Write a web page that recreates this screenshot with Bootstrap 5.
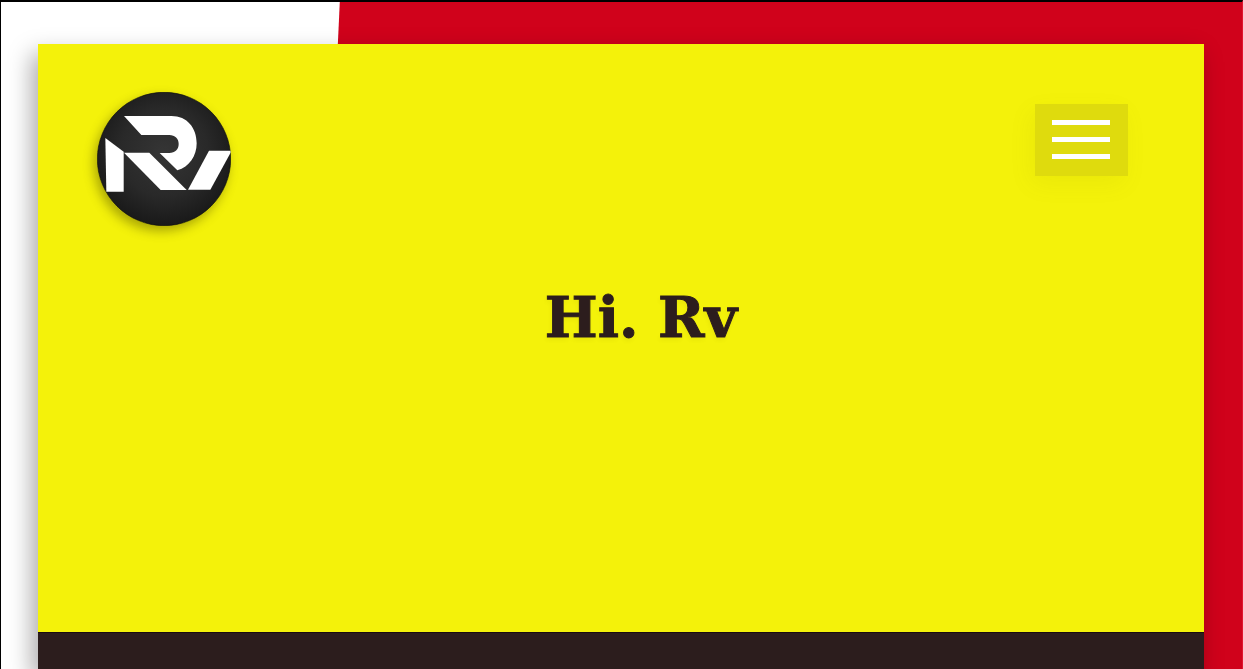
<!DOCTYPE html>
<html lang="en">
<head>
<meta charset="utf-8">
<meta name="viewport" content="width=device-width, initial-scale=1">
<title>Hi. Rv</title>
<link href="https://cdn.jsdelivr.net/npm/bootstrap@5.3.0/dist/css/bootstrap.min.css" rel="stylesheet">
<style>
  body { background: #fff; }
  .stage {
    position: relative;
    isolation: isolate;
    padding: 42px 38px 0 37px;
    border-top: 2px solid #000;
    border-left: 1px solid #000;
    border-right: 1px solid #e0152f;
    overflow: hidden;
  }
  /* slanted red backdrop behind the sheet */
  .stage::before {
    content: "";
    position: absolute;
    inset: 0;
    z-index: -1;
    background: #d0021b;
    clip-path: polygon(27.3% 0, 100% 0, 100% 100%, 24.8% 100%);
  }
  .sheet { box-shadow: -6px 10px 22px rgba(10, 0, 5, .34); }
  .hero { background: #f4f20a; }
  .topbar { padding: 48px 76px 0 59px; }
  .brand-logo {
    width: 134px;
    height: 134px;
    border-radius: 50%;
    box-shadow: -3px 5px 11px rgba(80, 75, 0, .45);
  }
  .brand-logo svg { width: 100%; height: 100%; }
  .menu-btn {
    width: 93px;
    height: 72px;
    gap: 12px;
    margin-top: 12px;
    padding: 16px 18px 0 17px;
    border: 0;
    border-radius: 0;
    background: #dfdb0d;
    box-shadow: -4px 8px 24px rgba(120, 110, 0, .07);
  }
  .menu-btn:hover { background: #d3cf0c; }
  .menu-btn span { height: 5px; background: #fff; }
  .greeting {
    padding: 59px 0 0 40px;
    color: #2c1d1d;
    font: 700 56px/64px "DejaVu Serif", serif;
    -webkit-text-stroke: 1px #2c1d1d;
    text-shadow: -1px 3px 4px rgba(80, 75, 0, .07);
  }
  .next-band { height: 37px; background: #2c1d1d; border-top: 1px solid #1a0c10; }
</style>
</head>
<body>
<div class="stage min-vh-100 d-flex flex-column">
  <div class="sheet flex-grow-1 d-flex flex-column">
    <main class="hero flex-grow-1">
      <header class="topbar d-flex justify-content-between align-items-start">
        <a class="brand-logo d-block" href="#" aria-label="Rv home">
          <svg class="d-block" viewBox="51 36 402 402" aria-hidden="true">
            <defs>
              <radialGradient id="disc" cx="50%" cy="45%" r="55%">
                <stop offset="0" stop-color="#353535"/>
                <stop offset=".6" stop-color="#292929"/>
                <stop offset="1" stop-color="#191919"/>
              </radialGradient>
              <clipPath id="round"><circle cx="252" cy="237" r="201"/></clipPath>
            </defs>
            <circle cx="252" cy="237" r="200" fill="url(#disc)" stroke="#0c0c0c" stroke-width="2"/>
            <g fill="#fff" clip-path="url(#round)">
              <path d="M132 108H274C322 108 350 144 350 190C350 228 328 261 292 271L239 219H268C285 219 296 208 296 192C296 176 285 165 268 165H184Z"/>
              <path d="M76 174L131 215V335H79Z"/>
              <path d="M132 218H208L320 330H242Z"/>
              <path d="M387 212H455L391 329H324Z"/>
            </g>
          </svg>
        </a>
        <button class="menu-btn btn d-flex flex-column align-items-stretch" type="button" aria-label="Open menu">
          <span></span><span></span><span></span>
        </button>
      </header>
      <h1 class="greeting text-center mb-0">Hi. Rv</h1>
    </main>
    <footer class="next-band"></footer>
  </div>
</div>
<script src="https://cdn.jsdelivr.net/npm/bootstrap@5.3.0/dist/js/bootstrap.bundle.min.js"></script>
</body>
</html>
